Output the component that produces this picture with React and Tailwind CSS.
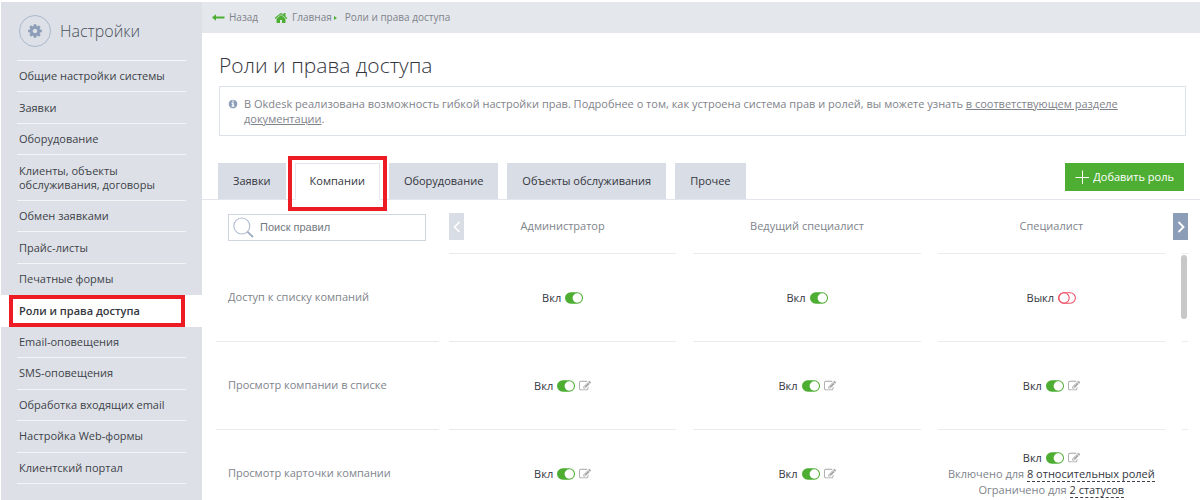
import { useState } from 'react'
import clsx from 'clsx'

const menu = [
  'Общие настройки системы',
  'Заявки',
  'Оборудование',
  'Клиенты, объекты обслуживания, договоры',
  'Обмен заявками',
  'Прайс-листы',
  'Печатные формы',
  'Роли и права доступа',
  'Email-оповещения',
  'SMS-оповещения',
  'Обработка входящих email',
  'Настройка Web-формы',
  'Клиентский портал',
]

const tabs = ['Заявки', 'Компании', 'Оборудование', 'Объекты обслуживания', 'Прочее']

const roles = ['Администратор', 'Ведущий специалист', 'Специалист']

const initialRules = [
  {
    name: 'Доступ к списку компаний',
    cells: [{ on: true }, { on: true }, { on: false }],
  },
  {
    name: 'Просмотр компании в списке',
    cells: [{ on: true, edit: true }, { on: true, edit: true }, { on: true, edit: true }],
  },
  {
    name: 'Просмотр карточки компании',
    cells: [
      { on: true, edit: true },
      { on: true, edit: true },
      {
        on: true,
        edit: true,
        notes: [
          ['Включено для', '8 относительных ролей'],
          ['Ограничено для', '2 статусов'],
        ],
      },
    ],
  },
]

const icons = {
  cog: 'M1152 896q0-106-75-181t-181-75-181 75-75 181 75 181 181 75 181-75 75-181zm512-109v222q0 12-8 23t-20 13l-185 28q-19 54-39 91 35 50 107 138 10 12 10 25t-9 23q-27 37-99 108t-94 71q-12 0-26-9l-138-108q-44 23-91 38-16 136-29 186-7 28-36 28h-222q-14 0-24.5-8.5t-11.5-21.5l-28-184q-49-16-90-37l-141 107q-10 9-25 9-14 0-25-11-126-114-165-168-7-10-7-23 0-12 8-23 15-21 51-66.5t54-70.5q-27-50-41-99l-183-27q-13-2-21-12.5t-8-23.5v-222q0-12 8-23t19-13l186-28q14-46 39-92-40-57-107-138-10-12-10-24 0-10 9-23 26-36 98.5-107.5t94.5-71.5q13 0 26 10l138 107q44-23 91-38 16-136 29-186 7-28 36-28h222q14 0 24.5 8.5t11.5 21.5l28 184q49 16 90 37l142-107q9-9 24-9 13 0 25 10 129 119 165 170 7 8 7 22 0 12-8 23-15 21-51 66.5t-54 70.5q26 50 41 98l183 28q13 2 21 12.5t8 23.5z',
  home: 'M1472 992v480q0 26-19 45t-45 19h-384v-384h-256v384h-384q-26 0-45-19t-19-45v-480q0-1 .5-3t.5-3l575-474 575 474q1 2 1 6zm223-69l-62 74q-8 9-21 11h-3q-13 0-21-7l-692-577-692 577q-12 8-24 7-13-2-21-11l-62-74q-8-10-7-23.5t11-21.5l719-599q32-26 76-26t76 26l244 204v-195q0-14 9-23t23-9h192q14 0 23 9t9 23v408l219 182q10 8 11 21.5t-7 23.5z',
  info: 'M1152 1376v-160q0-14-9-23t-23-9h-96v-512q0-14-9-23t-23-9h-320q-14 0-23 9t-9 23v160q0 14 9 23t23 9h96v320h-96q-14 0-23 9t-9 23v160q0 14 9 23t23 9h448q14 0 23-9t9-23zm-128-896v-160q0-14-9-23t-23-9h-192q-14 0-23 9t-9 23v160q0 14 9 23t23 9h192q14 0 23-9t9-23zm640 416q0 209-103 385.5t-279.5 279.5-385.5 103-385.5-103-279.5-279.5-103-385.5 103-385.5 279.5-279.5 385.5-103 385.5 103 279.5 279.5 103 385.5z',
  edit: 'M888 1184l116-116-152-152-116 116v56h96v96h56zm440-720q-16-16-33 1l-350 350q-17 17-1 33t33-1l350-350q17-17 1-33zm80 594v190q0 119-84.5 203.5t-203.5 84.5h-832q-119 0-203.5-84.5t-84.5-203.5v-832q0-119 84.5-203.5t203.5-84.5h832q63 0 117 25 15 7 18 23 3 17-9 29l-49 49q-14 14-32 8-23-6-45-6h-832q-66 0-113 47t-47 113v832q0 66 47 113t113 47h832q66 0 113-47t47-113v-126q0-13 9-22l64-64q15-15 35-7t20 29zm-96-738l288 288-672 672h-288v-288zm444 132l-92 92-288-288 92-92q28-28 68-28t68 28l152 152q28 28 28 68t-28 68z',
}

function Icon({ name, className }) {
  return (
    <svg viewBox="0 0 1792 1792" fill="currentColor" className={className} aria-hidden="true">
      <path d={icons[name]} />
    </svg>
  )
}

function Toggle({ on, label, onClick }) {
  return (
    <button type="button" role="switch" aria-checked={on} aria-label={label} onClick={onClick} className="cursor-pointer">
      <svg viewBox="0 0 18 12" className="w-[18px] h-3" fill="none">
        {on ? (
          <>
            <rect x="0" y="0.3" width="18" height="11.4" rx="5.7" fill="#4eae33" />
            <circle cx="12.3" cy="6" r="4.7" fill="#fff" />
          </>
        ) : (
          <>
            <rect x="0.6" y="0.8" width="16.8" height="10.4" rx="5.2" stroke="#ef5468" strokeWidth="1.1" />
            <circle cx="6" cy="6" r="5.2" stroke="#ef5468" strokeWidth="1.1" />
          </>
        )}
      </svg>
    </button>
  )
}

function Sidebar() {
  return (
    <aside className="w-[201px] shrink-0 flex flex-col bg-[#dde1e7] pb-4">
      <div className="flex items-center gap-[9px] h-[58px] pl-[18px] text-[#4b505a]">
        <span className="flex items-center justify-center w-8 h-8 rounded-full border border-[#aab8cc] text-[#8c9db8]">
          <Icon name="cog" className="w-4 h-4" />
        </span>
        <span className="text-base font-light">Настройки</span>
      </div>
      <div className="mx-4 border-t border-[#f6f7f9]" />
      <nav className="flex-1 flex flex-col">
        {menu.map((item, i) => {
          const active = item === 'Роли и права доступа'
          const beforeActive = menu[i + 1] === 'Роли и права доступа'
          return (
            <a
              key={item}
              href="#"
              className={clsx(
                'relative grow flex flex-col text-[11px] leading-[14px]',
                active ? 'bg-white font-semibold text-[#33363d]' : 'text-[#3d4149]'
              )}
            >
              <span
                className={clsx(
                  'grow flex items-center mx-4 px-0.5 py-2 border-b',
                  active || beforeActive ? 'border-transparent' : 'border-[#f3f5f7]'
                )}
              >
                {item}
              </span>
              {active && <span className="absolute left-2 right-[17px] inset-y-0 border-4 border-[#ed1c24]" />}
            </a>
          )
        })}
      </nav>
    </aside>
  )
}

function TopBar() {
  return (
    <div className="flex items-center h-[31px] shrink-0 pl-[10px] bg-[#e4e7ec] text-[10px] text-[#7f838b]">
      <a href="#" className="flex items-center gap-1">
        <svg viewBox="0 0 13 7" className="w-[13px] h-[7px] text-[#4eae33]" fill="currentColor">
          <path d="M0 3.5L4 0.3V2.5H12.5V4.5H4V6.7Z" />
        </svg>
        Назад
      </a>
      <a href="#" className="flex items-center gap-1 ml-4">
        <Icon name="home" className="w-[14px] h-[14px] text-[#4eae33]" />
        Главная
      </a>
      <svg viewBox="0 0 3 4" className="w-[3px] h-1 ml-0.5 mr-2 text-[#4eae33]" fill="currentColor">
        <path d="M0 0L3 2L0 4Z" />
      </svg>
      <span>Роли и права доступа</span>
    </div>
  )
}

function Tabs({ current, onChange }) {
  return (
    <div className="flex items-end justify-between border-b border-[#e4e6ed] pl-4 pr-4">
      <div className="flex gap-[9px] -mb-px" role="tablist">
        {tabs.map((tab) => {
          const active = tab === current
          return (
            <button
              key={tab}
              type="button"
              role="tab"
              aria-selected={active}
              onClick={() => onChange(tab)}
              className={clsx(
                'relative h-[37px] px-[14px] border text-[11px] text-[#33363d] cursor-pointer',
                active ? 'bg-white border-[#e4e6ed] border-b-white' : 'bg-[#d9dde5] border-[#d9dde5] border-b-[#e4e6ed]'
              )}
            >
              {tab}
              {tab === 'Компании' && (
                <span className="absolute -inset-x-2 -top-2 -bottom-3 border-4 border-[#ed1c24]" />
              )}
            </button>
          )
        })}
      </div>
      <button type="button" className="flex items-center gap-1 h-7 mb-2 px-[10px] bg-[#4eae33] text-[11px] text-white cursor-pointer">
        <svg viewBox="0 0 14 14" className="w-[14px] h-[14px]" stroke="currentColor" strokeWidth="1">
          <path d="M7.5 0.5V14M0.5 7.5H14" />
        </svg>
        Добавить роль
      </button>
    </div>
  )
}

function RuleCell({ cell, label, onToggle }) {
  return (
    <div className="flex flex-col items-center justify-center h-[88px] mr-[17px] border-b border-[#ebebeb]">
      <div className="flex items-center gap-1 leading-4 text-[#33363d]">
        {cell.on ? 'Вкл' : 'Выкл'}
        <Toggle on={cell.on} label={label} onClick={onToggle} />
        {cell.edit && (
          <button type="button" aria-label="Изменить" className="text-[#a5a5a5] cursor-pointer">
            <Icon name="edit" className="w-3 h-3" />
          </button>
        )}
      </div>
      {cell.notes?.map(([text, link]) => (
        <div key={text} className="leading-4 whitespace-nowrap">
          {text}{' '}
          <a href="#" className="border-b border-dashed border-[#3d4149] text-[#33363d]">{link}</a>
        </div>
      ))}
    </div>
  )
}

export default function App() {
  const [tab, setTab] = useState('Компании')
  const [query, setQuery] = useState('')
  const [rules, setRules] = useState(initialRules)

  const toggle = (row, col) =>
    setRules(rules.map((rule, r) =>
      r !== row ? rule : { ...rule, cells: rule.cells.map((c, i) => (i === col ? { ...c, on: !c.on } : c)) }
    ))

  const visible = rules.filter((rule) => rule.name.toLowerCase().includes(query.toLowerCase()))

  return (
    <div className="flex h-screen overflow-hidden pt-0.5 pl-px bg-white font-['Open_Sans','Noto_Sans',sans-serif]">
      <Sidebar />
      <main className="flex-1 min-w-0 flex flex-col">
        <TopBar />
        <h1 className="mt-4 ml-[17px] text-[21px] leading-8 font-light text-[#33363d]">Роли и права доступа</h1>
        <div className="flex gap-1.5 mt-[5px] mb-[27px] ml-[17px] mr-[14px] px-2 py-[9px] border border-[#dde1e9] text-[11px] leading-[15px] text-[#7f838b]">
          <Icon name="info" className="w-[10px] h-[10px] mt-[3px] shrink-0 text-[#8c9db8]" />
          <p>
            В Okdesk реализована возможность гибкой настройки прав. Подробнее о том, как устроена система прав и ролей, вы можете узнать{' '}
            <a href="#" className="underline">в соответствующем разделе документации</a>.
          </p>
        </div>

        <Tabs current={tab} onChange={setTab} />

        <div className="relative pl-[14px] pr-3">
          <table className="w-full table-fixed text-[11px] text-[#80848c]">
            <thead>
              <tr>
                <th className="w-[233px] p-0 font-normal">
                  <div className="flex items-center h-[54px]">
                    <label className="flex items-center gap-1.5 w-[198px] h-[27px] ml-3 px-1 border border-[#d0d6e0]">
                      <svg viewBox="0 0 21 21" className="w-[21px] h-[21px] shrink-0" fill="none">
                        <circle cx="8.8" cy="9" r="8" stroke="#b4c0d1" strokeWidth="1.2" />
                        <path d="M14.5 14.8L20 20" stroke="#9fadc2" strokeWidth="1.8" />
                      </svg>
                      <input
                        type="text"
                        aria-label="Поиск правил"
                        placeholder="Поиск правил"
                        value={query}
                        onChange={(e) => setQuery(e.target.value)}
                        className="w-full min-w-0 outline-none font-['Liberation_Sans',sans-serif] text-[11px] placeholder:text-[#74787f]"
                      />
                    </label>
                  </div>
                </th>
                {roles.map((role, i) => (
                  <th key={role} className="relative p-0 font-normal">
                    {i === 0 && (
                      <button type="button" aria-label="Назад" className="absolute left-0 top-[13px] flex items-center justify-center w-[15px] h-[27px] bg-[#d9dde5] text-white">
                        <svg viewBox="0 0 8 12" className="w-2 h-3" fill="none" stroke="currentColor" strokeWidth="1.6">
                          <path d="M6.5 1L1.5 6L6.5 11" />
                        </svg>
                      </button>
                    )}
                    <div className="flex items-center justify-center h-[54px] mr-[17px] border-b border-[#ebebeb]">{role}</div>
                  </th>
                ))}
                <th className="relative w-1.5 p-0">
                  <button type="button" aria-label="Вперёд" className="absolute right-0 top-[13px] flex items-center justify-center w-[15px] h-[27px] bg-[#8c9db8] text-white cursor-pointer">
                    <svg viewBox="0 0 8 12" className="w-2 h-3" fill="none" stroke="currentColor" strokeWidth="1.8">
                      <path d="M1.5 1L6.5 6L1.5 11" />
                    </svg>
                  </button>
                  <div className="h-[54px] border-b border-[#ebebeb]" />
                </th>
              </tr>
            </thead>
            <tbody>
              {visible.map((rule) => {
                const row = rules.indexOf(rule)
                return (
                  <tr key={rule.name}>
                    <th scope="row" className="p-0 font-normal text-left">
                      <div className="flex items-center h-[88px] mr-[10px] pl-3 border-b border-[#ebebeb]">{rule.name}</div>
                    </th>
                    {rule.cells.map((cell, col) => (
                      <td key={roles[col]} className="p-0">
                        <RuleCell cell={cell} label={`${rule.name}: ${roles[col]}`} onToggle={() => toggle(row, col)} />
                      </td>
                    ))}
                    <td className="p-0">
                      <div className="h-[88px] border-b border-[#ebebeb]" />
                    </td>
                  </tr>
                )
              })}
            </tbody>
          </table>
          {/* scroll thumb over the last column */}
          <div className="absolute right-px top-[55px] w-1.5 h-16 mr-3 rounded-full bg-[#c8c8c8]" />
        </div>
      </main>
    </div>
  )
}
